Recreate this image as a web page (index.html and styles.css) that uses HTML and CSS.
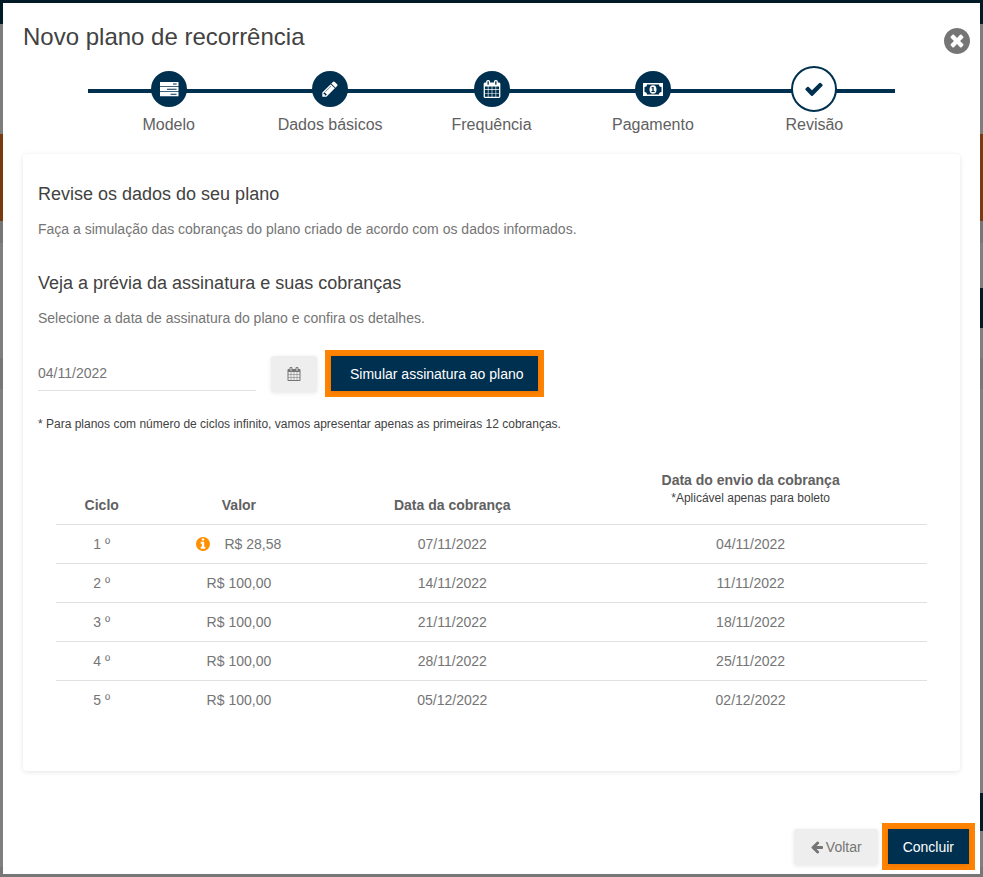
FILE: index.html
```html
<!DOCTYPE html>
<html lang="pt-BR">
<head>
  <meta charset="UTF-8" />
  <title>Novo plano de recorrência</title>
  <meta name="viewport" content="width=device-width, initial-scale=1.0" />
  <link rel="stylesheet" href="styles.css">
</head>
<body>

  <!-- Shared icons -->
  <svg class="icon-defs" aria-hidden="true">
    <symbol id="icon-calendar" viewBox="0 0 1792 1792">
      <path d="M192 1664h288v-288h-288v288zm352 0h320v-288h-320v288zm-352-352h288v-320h-288v320zm352 0h320v-320h-320v320zm-352-384h288v-288h-288v288zm736 736h320v-288h-320v288zm-384-736h320v-288h-320v288zm768 736h288v-288h-288v288zm-384-352h320v-320h-320v320zm-352-864v-288q0-13-9.500-22.500t-22.500-9.500h-64q-13 0-22.500 9.500t-9.500 22.500v288q0 13 9.500 22.500t22.500 9.500h64q13 0 22.500-9.500t9.500-22.500zm736 864h288v-320h-288v320zm-384-384h320v-288h-320v288zm384 0h288v-288h-288v288zm32-480v-288q0-13-9.500-22.500t-22.500-9.500h-64q-13 0-22.500 9.500t-9.500 22.500v288q0 13 9.500 22.500t22.500 9.500h64q13 0 22.500-9.500t9.500-22.500zm384-64v1280q0 52-38 90t-90 38h-1408q-52 0-90-38t-38-90v-1280q0-52 38-90t90-38h128v-96q0-66 47-113t113-47h64q66 0 113 47t47 113v96h384v-96q0-66 47-113t113-47h64q66 0 113 47t47 113v96h128q52 0 90 38t38 90z"/>
    </symbol>
  </svg>

  <main class="modal">
    <!-- HEADER -->
    <header class="modal-header">
      <h1>Novo plano de recorrência</h1>
      <button class="close-button" type="button" aria-label="Fechar">
        <svg viewBox="128 128 1536 1536"><path d="M1277 1122q0-26-19-45l-181-181 181-181q19-19 19-45 0-27-19-46l-90-90q-19-19-46-19-26 0-45 19l-181 181-181-181q-19-19-45-19-27 0-46 19l-90 90q-19 19-19 46 0 26 19 45l181 181-181 181q-19 19-19 45 0 27 19 46l90 90q19 19 46 19 26 0 45-19l181-181 181 181q19 19 45 19 27 0 46-19l90-90q19-19 19-46zm387-226q0 209-103 385.500t-279.500 279.500-385.500 103-385.500-103-279.500-279.500-103-385.500 103-385.500 279.500-279.500 385.500-103 385.500 103 279.500 279.500 103 385.500z"/></svg>
      </button>
    </header>

    <!-- STEPS -->
    <ol class="steps">
      <li class="step">
        <span class="step-marker">
          <span class="step-circle">
            <svg viewBox="0 0 18 18">
              <path fill-rule="evenodd" d="M0 2h18.500v4.300h-18.500zM13 3.600h3.600v1h-3.600zM0 7h18.500v4.300h-18.500zM7 8.700h9.600v1h-9.600zM0 12h18.500v4.300h-18.500zM10.500 13.700h6v1h-6z"/>
            </svg>
          </span>
        </span>
        <span class="step-label">Modelo</span>
      </li>
      <li class="step">
        <span class="step-marker">
          <span class="step-circle">
            <svg viewBox="0 0 1792 1792"><path d="M491 1536l91-91-235-235-91 91v107h128v128h107zm523-928q0-22-22-22-10 0-17 7l-542 542q-7 7-7 17 0 22 22 22 10 0 17-7l542-542q7-7 7-17zm-54-192l416 416-832 832h-416v-416zm683 96q0 53-37 90l-166 166-416-416 166-165q36-38 90-38 53 0 91 38l235 234q37 39 37 91z"/></svg>
          </span>
        </span>
        <span class="step-label">Dados básicos</span>
      </li>
      <li class="step">
        <span class="step-marker">
          <span class="step-circle">
            <svg><use href="#icon-calendar"/></svg>
          </span>
        </span>
        <span class="step-label">Frequência</span>
      </li>
      <li class="step">
        <span class="step-marker">
          <span class="step-circle">
            <svg class="icon-money" viewBox="0 0 20 18">
              <path fill-rule="evenodd" d="M0 3h20v13h-20zM4 4.500q0 2.500-2.500 2.500v5q2.500 0 2.500 2.500h12q0-2.500 2.500-2.500v-5q-2.500 0-2.500-2.500z"/>
              <ellipse cx="10" cy="9.500" rx="3.500" ry="4.300"/>
              <path class="coin-mark" d="M9.500 7h1.200v4h1v1h-3.300v-1h1v-2.700h-1v-.8z"/>
            </svg>
          </span>
        </span>
        <span class="step-label">Pagamento</span>
      </li>
      <li class="step active" aria-current="step">
        <span class="step-marker">
          <span class="step-circle">
            <svg viewBox="0 0 1792 1792"><path d="M1671 566q0 40-28 68l-724 724-136 136q-28 28-68 28t-68-28l-136-136-362-362q-28-28-28-68t28-68l136-136q28-28 68-28t68 28l294 295 656-657q28-28 68-28t68 28l136 136q28 28 28 68z"/></svg>
          </span>
        </span>
        <span class="step-label">Revisão</span>
      </li>
    </ol>

    <!-- REVIEW CARD -->
    <section class="card">
      <h2>Revise os dados do seu plano</h2>
      <p class="card-text">Faça a simulação das cobranças do plano criado de acordo com os dados informados.</p>

      <h2>Veja a prévia da assinatura e suas cobranças</h2>
      <p class="card-text"><label for="start-date">Selecione a data de assinatura do plano e confira os detalhes.</label></p>

      <form class="simulate-form">
        <input type="text" id="start-date" value="04/11/2022" />
        <button class="btn btn-calendar" type="button" aria-label="Abrir calendário">
          <svg><use href="#icon-calendar"/></svg>
        </button>
        <div class="highlight">
          <button class="btn btn-primary btn-simulate" type="button">Simular assinatura ao plano</button>
        </div>
      </form>

      <p class="note">* Para planos com número de ciclos infinito, vamos apresentar apenas as primeiras 12 cobranças.</p>

      <table class="charges">
        <thead>
          <tr>
            <th class="col-cycle">Ciclo</th>
            <th class="col-value">Valor</th>
            <th class="col-date">Data da cobrança</th>
            <th class="col-sent">Data do envio da cobrança <small>*Aplicável apenas para boleto</small></th>
          </tr>
        </thead>
        <tbody>
          <tr>
            <td>1 º</td>
            <td>
              <span class="value-info">
                <svg viewBox="128 128 1536 1536"><path d="M1152 1376v-160q0-14-9-23t-23-9h-96v-512q0-14-9-23t-23-9h-320q-14 0-23 9t-9 23v160q0 14 9 23t23 9h96v320h-96q-14 0-23 9t-9 23v160q0 14 9 23t23 9h448q14 0 23-9t9-23zm-128-896v-160q0-14-9-23t-23-9h-192q-14 0-23 9t-9 23v160q0 14 9 23t23 9h192q14 0 23-9t9-23zm640 416q0 209-103 385.500t-279.500 279.500-385.500 103-385.500-103-279.500-279.500-103-385.500 103-385.500 279.500-279.500 385.500-103 385.500 103 279.500 279.500 103 385.500z"/></svg>
                R$ 28,58
              </span>
            </td>
            <td>07/11/2022</td>
            <td>04/11/2022</td>
          </tr>
          <tr>
            <td>2 º</td>
            <td>R$ 100,00</td>
            <td>14/11/2022</td>
            <td>11/11/2022</td>
          </tr>
          <tr>
            <td>3 º</td>
            <td>R$ 100,00</td>
            <td>21/11/2022</td>
            <td>18/11/2022</td>
          </tr>
          <tr>
            <td>4 º</td>
            <td>R$ 100,00</td>
            <td>28/11/2022</td>
            <td>25/11/2022</td>
          </tr>
          <tr>
            <td>5 º</td>
            <td>R$ 100,00</td>
            <td>05/12/2022</td>
            <td>02/12/2022</td>
          </tr>
        </tbody>
      </table>
    </section>

    <!-- FOOTER BUTTONS -->
    <footer class="modal-footer">
      <button class="btn btn-back" type="button">
        <svg viewBox="0 0 1792 1792"><path d="M1664 896v128q0 53-32.500 90.500t-84.500 37.500h-704l293 294q38 36 38 90t-38 90l-75 76q-37 37-90 37-52 0-91-37l-651-652q-37-37-37-90 0-52 37-91l651-650q38-38 91-38 52 0 90 38l75 74q38 38 38 91t-38 91l-293 293h704q52 0 84.500 37.500t32.500 90.500z"/></svg>
        Voltar
      </button>
      <div class="highlight">
        <button class="btn btn-primary" type="button">Concluir</button>
      </div>
    </footer>
  </main>

</body>
</html>
```
FILE: styles.css
```css
/* ---------------------------------------------
   GENERAL / RESET
--------------------------------------------- */
* {
  margin: 0;
  padding: 0;
  box-sizing: border-box;
  font-family: "Liberation Sans", Arial, sans-serif;
}

body {
  /* Dimmed page behind the modal */
  background:
    linear-gradient(#001a26, #001a26) right 288px / 3px 40px no-repeat,
    linear-gradient(#001a26, #001a26) right 793px / 3px 38px no-repeat,
    linear-gradient(#001a26 24px, #7d7d7d 24px 134px, #7a3a10 134px 221px, #767676 221px 243px, #7f7f7f 243px 358px, #777 358px 389px, #7f7f7f 389px 867px, #777 867px);
  color: #757575;
  font-size: 14px;
  line-height: 20px;
  min-height: 100vh;
  padding: 3px;
  display: flex;
}

.icon-defs {
  display: none;
}
svg {
  fill: currentColor;
  flex: none;
}

.modal {
  flex: 1;
  min-width: 0;
  background: #fff;
  display: flex;
  flex-direction: column;
}

/* ---------------------------------------------
   HEADER
--------------------------------------------- */
.modal-header {
  display: flex;
  justify-content: space-between;
  align-items: flex-end;
  padding: 20px 10px 0 20px;
}
.modal-header h1 {
  font-size: 24px;
  line-height: 28px;
  font-weight: normal;
  color: #424242;
  padding-bottom: 3px;
}
.close-button {
  width: 26px;
  height: 26px;
  background: none;
  border: none;
  color: #757575;
  cursor: pointer;
}
.close-button svg {
  display: block;
  width: 26px;
  height: 26px;
}

/* ---------------------------------------------
   STEPS
--------------------------------------------- */
.steps {
  list-style: none;
  display: flex;
  margin: 12px 85px 0;
}
.step {
  flex: 1;
  text-align: center;
}
.step-marker {
  height: 46px;
  display: flex;
  align-items: center;
  justify-content: center;
  background: linear-gradient(#00304f, #00304f) 0 23px / 100% 4px no-repeat;
}
.step-circle {
  width: 36px;
  height: 36px;
  border-radius: 50%;
  background: #00304f;
  color: #fff;
  display: flex;
  align-items: center;
  justify-content: center;
}
.step-circle svg {
  width: 18px;
  height: 18px;
  overflow: visible;
}
.step-circle .icon-money {
  width: 20px;
}
.coin-mark {
  fill: #00304f;
}
.step.active .step-circle {
  width: 46px;
  height: 46px;
  background: #fff;
  border: 2px solid #00304f;
  color: #00304f;
}
.step.active svg {
  width: 20px;
  height: 20px;
}
.step-label {
  display: block;
  font-size: 16px;
  line-height: 26px;
  color: #616161;
}

/* ---------------------------------------------
   CARD
--------------------------------------------- */
.card {
  margin: 16px 20px 0;
  padding: 28px 15px 51px;
  border-radius: 4px;
  box-shadow: 0 1px 5px rgba(0, 0, 0, 0.1);
}
.card h2 {
  font-size: 18px;
  line-height: 24px;
  font-weight: normal;
  color: #424242;
}
.card-text {
  margin: 13px 0 32px;
}

.simulate-form {
  display: flex;
  align-items: center;
  margin-top: -10px;
}
.simulate-form input {
  width: 218px;
  height: 34px;
  border: none;
  border-bottom: 1px solid #e0e0e0;
  color: #757575;
  font-size: 14px;
}
.note {
  font-size: 12px;
  color: #424242;
  margin-top: 17px;
}

/* ---------------------------------------------
   BUTTONS
--------------------------------------------- */
.btn {
  height: 36px;
  border: none;
  border-radius: 3px;
  background: #eee;
  color: #757575;
  font-size: 14px;
  cursor: pointer;
  display: flex;
  align-items: center;
  justify-content: center;
  box-shadow: 0 1px 4px rgba(0, 0, 0, 0.1);
}
.btn svg {
  width: 14px;
  height: 14px;
}
.btn-calendar {
  width: 46px;
  margin: 0 8px 0 15px;
}
.btn-primary {
  height: 35px;
  padding: 0 15px;
  border-radius: 0;
  background: #00304f;
  color: #fff;
}
.btn-simulate {
  padding: 0 14px 0 19px;
}
.btn-back {
  padding: 0 16px;
  gap: 2px;
}
.highlight {
  border: 6px solid #ff8200;
}

/* ---------------------------------------------
   CHARGES TABLE
--------------------------------------------- */
.charges {
  width: calc(100% - 36px);
  margin: 36px 18px 0;
  border-collapse: collapse;
  table-layout: fixed;
  text-align: center;
}
.charges th {
  padding-bottom: 9px;
  vertical-align: bottom;
  color: #616161;
}
.charges small {
  display: block;
  font-size: 12px;
  line-height: 16px;
  font-weight: normal;
  color: #424242;
}
.charges td {
  height: 39px;
  border-top: 1px solid #e0e0e0;
}
.col-cycle {
  width: 10.5%;
}
.col-value {
  width: 21%;
}
.col-date {
  width: 28%;
}
.charges .col-sent {
  padding-bottom: 18px;
}
.value-info {
  display: flex;
  align-items: center;
  justify-content: center;
  gap: 14px;
}
.value-info svg {
  width: 14px;
  height: 14px;
  color: #ff8f00;
}

/* ---------------------------------------------
   FOOTER
--------------------------------------------- */
.modal-footer {
  display: flex;
  justify-content: flex-end;
  align-items: center;
  gap: 4px;
  margin-top: auto;
  padding: 24px 5px 4px;
}

/* ---------------------------------------------
   RESPONSIVE DESIGN
--------------------------------------------- */
@media (max-width: 600px) {
  .steps {
    margin: 12px 0 0;
  }
  .step-label {
    font-size: 12px;
  }
  .simulate-form {
    flex-wrap: wrap;
    gap: 8px;
  }
}
```
